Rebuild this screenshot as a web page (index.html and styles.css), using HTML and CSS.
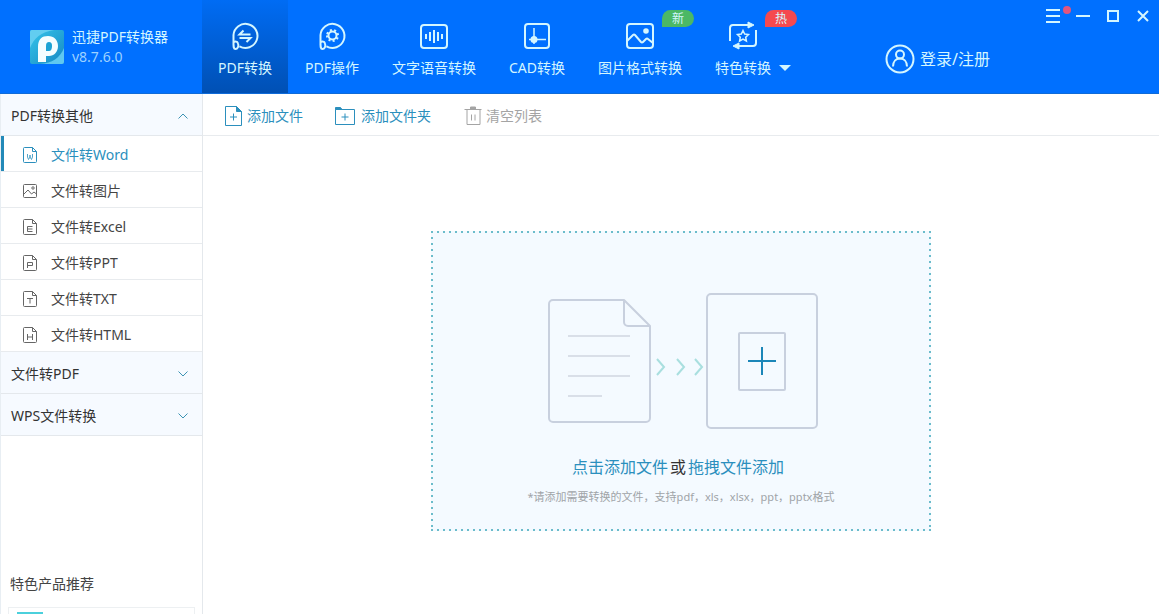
FILE: index.html
```html
<!DOCTYPE html>
<html lang="zh-CN">
<head>
<meta charset="utf-8">
<title>迅捷PDF转换器</title>
<link rel="stylesheet" href="styles.css">
</head>
<body>
<svg class="defs" aria-hidden="true">
  <symbol id="page" viewBox="0 0 16 18"><path d="M10.500 1.500H2.500a1 1 0 0 0-1 1v13a1 1 0 0 0 1 1h11a1 1 0 0 0 1-1V5.500zM10.500 1.500v4h4"/></symbol>
  <symbol id="down" viewBox="0 0 12 8"><path d="M1.500 1.500L6 6l4.500-4.500"/></symbol>
</svg>
<header class="header">
  <div class="brand">
    <svg class="logo" viewBox="0 0 34 34">
      <defs><linearGradient id="lg" x1="0" y1="0" x2="1" y2="1"><stop offset="0" stop-color="#35c4ea"/><stop offset="1" stop-color="#1689c4"/></linearGradient></defs>
      <rect width="34" height="34" rx="2" fill="url(#lg)"/>
      <path d="M0 18V2a2 2 0 0 1 2-2h22C11 2 4 8 0 18z" fill="#62cdf0"/>
      <path d="M34 18v14a2 2 0 0 1-2 2H10c12-1 20-6 24-16z" fill="#5fc8f0"/>
      <path d="M8 32V17C8 9 12 6 18 6c6 0 10 4 10 10 0 6-4 10-9 10h-3v6z" fill="#f4fdff"/>
      <path d="M16 21v-5c0-3 1-4 3-4s3 1 3 4-1 5-3 5z" fill="#1ba2d4"/>
    </svg>
    <div class="brand-text"><span>迅捷PDF转换器</span><span class="version">v8.7.6.0</span></div>
  </div>
  <nav class="nav">
    <button class="tab active">
      <svg viewBox="0 0 30 30"><path d="M3.500 24V14A12 12 0 1 1 9.500 25.300M3.500 22c0-2 4-2 4.500.5 1 3-.5 5.500-2.500 5.500s-2-2-2-6"/><path d="M20.500 13.500h-11l4-4M9.500 17h11l-4 4"/></svg>
      <span>PDF转换</span>
    </button>
    <button class="tab">
      <svg viewBox="0 0 30 30"><path d="M3.500 24V14A12 12 0 1 1 9.500 25.300M3.500 22c0-2 4-2 4.500.5 1 3-.5 5.500-2.500 5.500s-2-2-2-6"/><circle cx="15.500" cy="14.500" r="4"/><path stroke-dasharray="2 2.320" d="M10 14.500a5.500 5.500 0 1 0 11 0a5.500 5.500 0 1 0-11 0"/></svg>
      <span>PDF操作</span>
    </button>
    <button class="tab">
      <svg viewBox="0 0 30 30"><rect x="2" y="4" width="26" height="23" rx="3"/><path d="M7 13v5M11 11v9M15 9v13M19 11v9M23 13v5"/></svg>
      <span>文字语音转换</span>
    </button>
    <button class="tab">
      <svg viewBox="0 0 30 30"><rect x="3" y="3" width="24" height="24" rx="3"/><path class="star" d="M12 7v16M7 18.500h17"/><circle cx="12" cy="18.500" r="2.500" class="solid"/></svg>
      <span>CAD转换</span>
    </button>
    <button class="tab">
      <svg viewBox="0 0 30 30"><rect x="2" y="3" width="26" height="24" rx="3"/><path d="M2 20l6-6q1-1 2 0l6 7q1 1 2 0l3-3q1-1 2 0l5 4"/><circle cx="21" cy="10" r="1.800" class="solid"/></svg>
      <span>图片格式转换</span><i class="badge new">新</i>
    </button>
    <button class="tab">
      <svg viewBox="0 0 30 30"><path d="M2 20V7q0-3 3-3h16M28 9v13q0 3-3 3H9"/><path class="solid thin" d="M20 1l6 3-6 3zM11 22l-6 3 6 3z"/><path class="star" d="M15 9.500l1.700 3.500 3.800.5-2.800 2.700.7 3.800-3.400-1.800-3.400 1.800.7-3.800-2.800-2.700 3.800-.5z"/></svg>
      <span class="with-caret">特色转换</span><i class="badge hot">热</i>
    </button>
  </nav>
  <button class="login">
    <svg viewBox="0 0 30 30"><circle cx="15" cy="15" r="13.500"/><circle cx="15" cy="10.500" r="4"/><path d="M8 22.500c0-5 3-8 7-8s7 3 7 8"/></svg>
    <span>登录/注册</span>
  </button>
  <div class="window-controls">
    <button aria-label="菜单"><svg viewBox="0 0 16 16"><path d="M1 2h14M1 8h14M1 14h14"/></svg><i class="dot"></i></button>
    <button aria-label="最小化"><svg viewBox="0 0 16 16"><path d="M1 8h14"/></svg></button>
    <button aria-label="最大化"><svg viewBox="0 0 16 16"><rect x="3" y="3" width="10" height="10"/></svg></button>
    <button aria-label="关闭"><svg viewBox="0 0 16 16"><path d="M3 3l10 10M13 3L3 13"/></svg></button>
  </div>
</header>
<div class="body">
  <aside class="sidebar">
    <button class="group"><span>PDF转换其他</span><svg class="chev up"><use href="#down"/></svg></button>
    <ul class="items">
      <li><button class="item selected"><svg viewBox="0 0 16 18"><use href="#page"/><path class="fine" d="M5.500 8v3l1 2.500L8 11V9v2l1.500 2.500 1-2.500V8"/></svg>文件转Word</button></li>
      <li><button class="item"><svg viewBox="0 0 16 18"><rect x="1.500" y="2.500" width="13" height="13" rx="1"/><path d="M2 12l4-4 3.500 4 2.500-2 2.500 2"/><circle cx="11" cy="6" r="1.200"/></svg>文件转图片</button></li>
      <li><button class="item"><svg viewBox="0 0 16 18"><use href="#page"/><path d="M10.500 8.500h-5v5h5M5.500 11h5"/></svg>文件转Excel</button></li>
      <li><button class="item"><svg viewBox="0 0 16 18"><use href="#page"/><path d="M5.500 14v-5.500h5v3h-5"/></svg>文件转PPT</button></li>
      <li><button class="item"><svg viewBox="0 0 16 18"><use href="#page"/><path d="M5 8.500h6M8 8.500v5"/></svg>文件转TXT</button></li>
      <li><button class="item"><svg viewBox="0 0 16 18"><use href="#page"/><path d="M5.500 8v6M10.500 8v6M5.500 11h5"/></svg>文件转HTML</button></li>
    </ul>
    <button class="group"><span>文件转PDF</span><svg class="chev"><use href="#down"/></svg></button>
    <button class="group"><span>WPS文件转换</span><svg class="chev"><use href="#down"/></svg></button>
    <section class="promo">
      <h2>特色产品推荐</h2>
      <div class="promo-card"><div class="promo-logo"></div></div>
    </section>
  </aside>
  <main class="main">
    <div class="toolbar">
      <button class="tool"><svg viewBox="0 0 20 20"><path d="M12.500.5h-11v19h16v-14z"/><path class="solid" d="M12.500.5v5h5z"/><path d="M9.500 7.500v7M6 11h7"/></svg>添加文件</button>
      <button class="tool folder"><svg viewBox="0 0 20 20"><path d="M.5 3.500h19v15H.5z"/><path class="solid" d="M.5 1.500h5l1.500 2H.5z"/><path d="M10 7.500v7M6.500 11h7"/></svg>添加文件夹</button>
      <button class="tool clear"><svg viewBox="0 0 20 20"><path d="M1.500 3.500h17M4 3.500v15h13v-15M8.500 8.500v6M12 8.500v6"/><path class="solid" d="M7.500 1h5v2h-5z"/></svg>清空列表</button>
    </div>
    <div class="workspace">
      <section class="dropzone">
        <svg class="art" viewBox="0 0 270 136">
          <g fill="none" stroke="#c8d0de" stroke-width="2" stroke-linejoin="round">
            <path d="M76 7H5a4 4 0 0 0-4 4v114a4 4 0 0 0 4 4h93a4 4 0 0 0 4-4V33zM76 7v22a4 4 0 0 0 4 4h22"/>
            <rect x="159" y="1" width="110" height="134" rx="4"/>
            <rect x="191" y="40" width="46" height="57" rx="1"/>
            <path stroke="#d9dfe8" d="M20 43h62M20 63h62M20 83h62M20 103h34"/>
          </g>
          <path fill="none" stroke="#a9dfdf" stroke-width="2" d="M109 66l7 8-7 8M129 66l7 8-7 8M147 66l7 8-7 8"/>
          <path stroke="#1b86b8" stroke-width="2" d="M200 68h28M214 54v28"/>
        </svg>
        <p class="prompt"><a href="#add">点击添加文件</a><span>或</span><a href="#drag">拖拽文件添加</a></p>
        <p class="hint">*请添加需要转换的文件，支持pdf，xls，xlsx，ppt，pptx格式</p>
      </section>
    </div>
  </main>
</div>
</body>
</html>
```
FILE: styles.css
```css
* { box-sizing: border-box; }
body {
  margin: 0;
  height: 100vh;
  display: flex;
  flex-direction: column;
  overflow: hidden;
  background: #fff;
  color: #444;
  font: 14px/20px "Noto Sans", "Noto Sans CJK SC", sans-serif;
}
button { margin: 0; padding: 0; border: 0; background: none; color: inherit; font: inherit; cursor: pointer; }
svg { fill: none; stroke: currentColor; flex: none; }
i { font-style: normal; }
.defs { position: absolute; width: 0; height: 0; }
.solid { fill: currentColor; }

.header { display: flex; height: 94px; flex: none; background: #0070ff; border-bottom: 1px solid #0f6bd8; color: #d4f6ff; }
.brand { display: flex; align-items: center; gap: 8px; width: 202px; padding-left: 30px; }
.logo { width: 34px; height: 34px; stroke: none; }
.brand-text { display: flex; flex-direction: column; white-space: nowrap; }
.version { color: #9dd2ff; }

.nav { display: flex; gap: 1px; }
.tab { position: relative; display: flex; flex-direction: column; align-items: center; gap: 7px; padding: 21px 16px 0; white-space: nowrap; }
.tab.active { background: linear-gradient(#006cf4, #0050b4); }
.tab svg { width: 30px; height: 30px; stroke-width: 2; }
.tab .thin { stroke-width: 1; }
.tab .star { stroke-width: 1.5; }
.tab:last-child { align-items: flex-start; }
.tab:last-child svg { margin-left: 13px; }
.with-caret { display: flex; align-items: center; gap: 8px; }
.with-caret::after { content: ""; border: 6px solid transparent; border-top-color: currentColor; border-bottom: 0; }
.badge { position: absolute; top: 10px; width: 32px; height: 17px; border-radius: 9px 9px 9px 0; font-size: 12px; line-height: 17px; text-align: center; }
.new { background: #4bb865; right: 4px; }
.hot { background: #f5494f; left: 66px; }

.login { display: flex; align-items: center; gap: 5px; margin-left: 78px; padding-top: 24px; font-size: 16px; white-space: nowrap; }
.login svg { width: 30px; height: 30px; stroke-width: 2; }
.window-controls { display: flex; align-self: flex-start; gap: 14px; margin-left: auto; padding: 8px 8px 0 0; }
.window-controls button { position: relative; display: flex; }
.window-controls svg { width: 16px; height: 16px; stroke-width: 2; }
.dot { position: absolute; left: 18px; top: -2px; width: 8px; height: 8px; border-radius: 50%; background: #e0557f; }

.body { flex: 1; display: flex; min-height: 0; }
.sidebar { display: flex; flex-direction: column; width: 203px; flex: none; border-right: 1px solid #e4e8ec; border-left: 1px solid #e8eef3; }
.group { display: flex; align-items: center; justify-content: space-between; height: 42px; flex: none; padding: 2px 13px 0 10px; background: #f6faff; border-bottom: 1px solid #e4e8ec; color: #333; }
.chev { width: 12px; height: 8px; color: #3b93b4; }
.up { transform: rotate(180deg); }
.items { margin: 0; padding: 0; list-style: none; }
.item { display: flex; align-items: center; gap: 13px; width: 100%; height: 36px; padding: 2px 0 0 21px; border-bottom: 1px solid #e8ebee; }
.item svg { width: 16px; height: 18px; color: #666; }
.item .fine { stroke-width: 0.8; }
.item.selected, .selected svg { color: #2b8fbd; }
.selected { box-shadow: inset 3px 0 #2389b8; }
.promo { margin-top: auto; padding: 0 7px; }
.promo h2 { margin: 0 2px 13px; font: inherit; }
.promo-card { height: 7px; padding: 4px 8px 0; border: 1px solid #edf0f2; border-bottom: 0; }
.promo-logo { width: 26px; height: 2px; background: #4bd0dc; }

.main { flex: 1; display: flex; flex-direction: column; min-width: 0; }
.toolbar { display: flex; align-items: center; gap: 32px; height: 42px; flex: none; padding: 2px 0 0 21px; border-bottom: 1px solid #e8ebee; }
.tool { display: flex; align-items: center; gap: 3px; color: #2b8fbd; }
.tool svg { width: 20px; height: 20px; }
.folder { gap: 6px; }
.clear { color: #a4a4a4; }
.workspace { flex: 1; display: grid; place-items: center; padding-top: 12px; }
.dropzone {
  --dot: #6bbccb 0 2px, transparent 2px 6px;
  display: flex;
  flex-direction: column;
  align-items: center;
  width: 500px;
  padding: 62px 20px 24px;
  background:
    repeating-linear-gradient(90deg, var(--dot)) top / 100% 2px no-repeat,
    repeating-linear-gradient(90deg, var(--dot)) bottom / 100% 2px no-repeat,
    repeating-linear-gradient(var(--dot)) left / 2px 100% no-repeat,
    repeating-linear-gradient(var(--dot)) right / 2px 100% no-repeat,
    #f4faff;
}
.art { width: 270px; height: 136px; margin-left: 4px; stroke: none; }
.prompt { display: flex; gap: 2px; margin: 26px 0 0; padding-right: 6px; font-size: 16px; line-height: 24px; color: #333; }
.prompt a { color: #2b8fbd; text-decoration: none; }
.hint { margin: 8px 0 0; font-size: 11px; color: #a0a4a8; white-space: nowrap; }
```
